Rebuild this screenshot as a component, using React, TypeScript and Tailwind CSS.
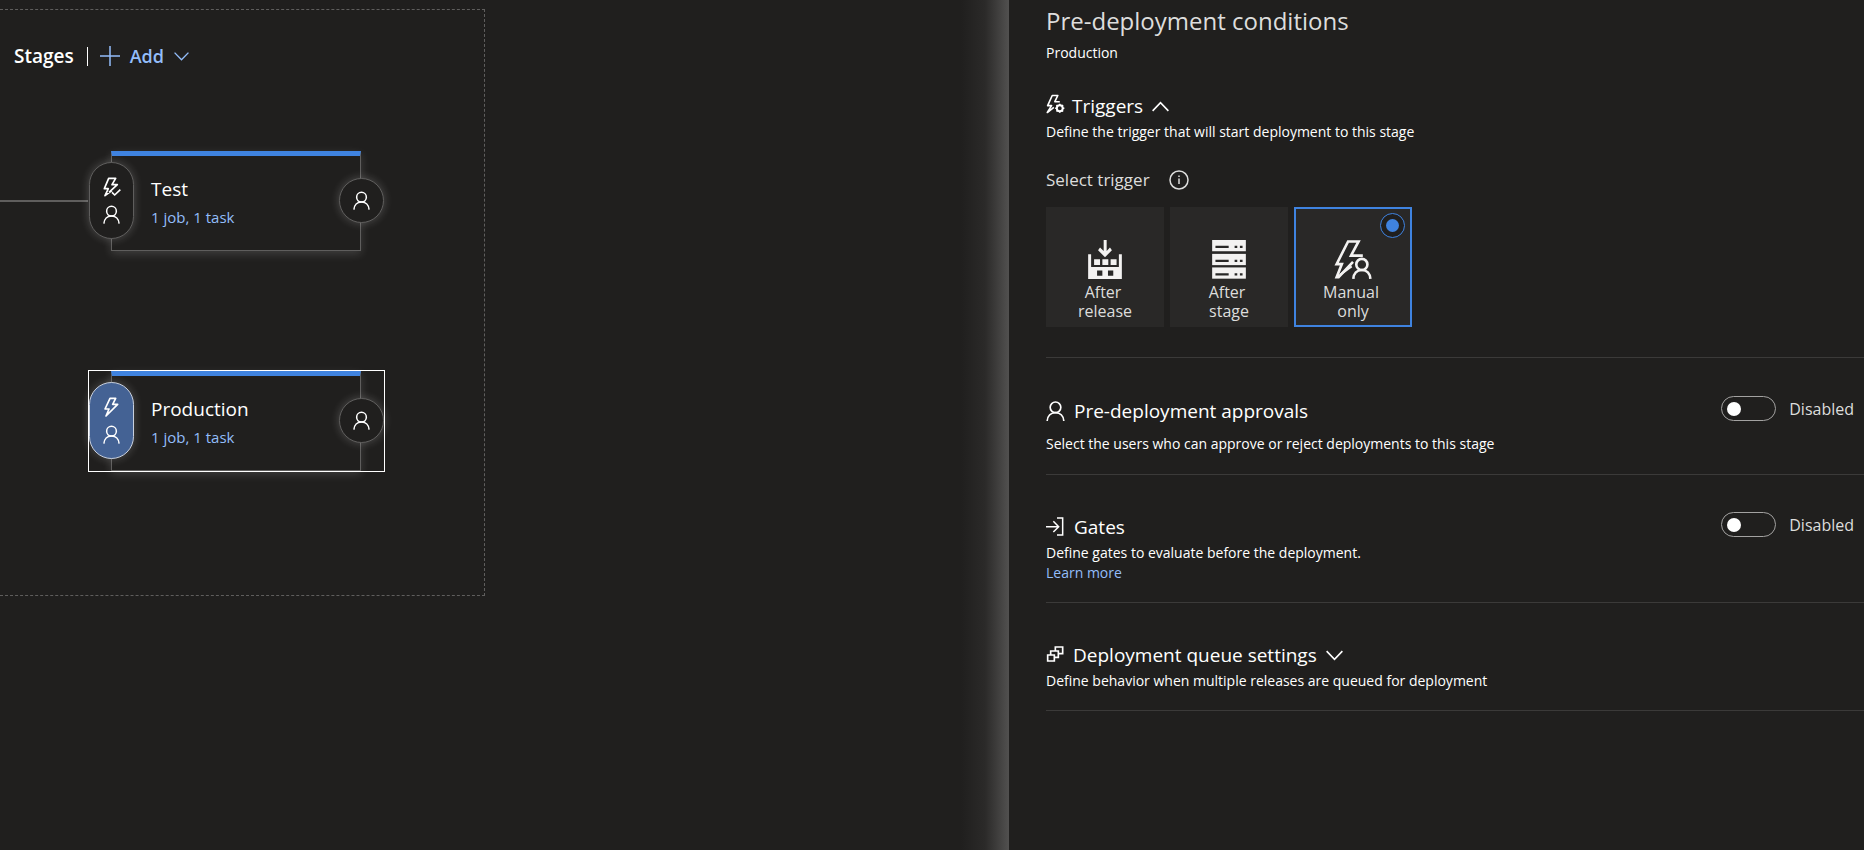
import React from "react";

type IconProps = { className?: string };

function PersonIcon({ className }: IconProps) {
  return (
    <svg viewBox="0 0 56 60" fill="none" stroke="currentColor" strokeWidth="5" className={className} aria-hidden="true">
      <circle cx="28" cy="19" r="16" />
      <path d="M3 60C4 45 14 35 28 35S52 45 53 60" />
    </svg>
  );
}

function BoltIcon({ className }: IconProps) {
  return (
    <svg viewBox="0 0 54 60" fill="none" stroke="currentColor" strokeWidth="5" strokeLinejoin="round" className={className} aria-hidden="true">
      <path d="M21 4H38L29 22H44L9 57L18 36H6Z" />
    </svg>
  );
}

function BoltCheckIcon({ className }: IconProps) {
  return (
    <svg viewBox="0 0 54 60" fill="none" stroke="currentColor" strokeWidth="5" strokeLinejoin="round" className={className} aria-hidden="true">
      <path d="M27 41L6 56L16 35H4L17 4H38L27 23H43L18 46" />
      <path d="M27 46L35 54L52 38" />
    </svg>
  );
}

function BoltGearIcon({ className }: IconProps) {
  return (
    <svg viewBox="0 0 58 60" fill="none" stroke="currentColor" strokeWidth="5" strokeLinejoin="round" className={className} aria-hidden="true">
      <path d="M42 23H27L36 4H19L5 35H17L4 56L24 40" />
      <circle cx="42" cy="43" r="9" strokeWidth="6" />
      <path d="M42 29V34M42 52V57M28 43H33M51 43H56M32 33L36 37M48 49L52 53M52 33L48 37M36 49L32 53" strokeWidth="5" />
    </svg>
  );
}

function BoltPersonIcon({ className }: IconProps) {
  return (
    <svg viewBox="0 0 116 118" fill="none" stroke="currentColor" strokeWidth="8" className={className} aria-hidden="true">
      <path d="M88 47H52L75 4H43L8 73H24L8 113H14L58 66" />
      <path d="M18 106L54 80" strokeWidth="6" />
      <circle cx="85" cy="74" r="17" />
      <path d="M59 118C60 101 70 91 85 91S110 101 111 118" />
    </svg>
  );
}

function ReleaseIcon({ className }: IconProps) {
  return (
    <svg viewBox="0 0 102 118" fill="currentColor" className={className} aria-hidden="true">
      <path d="M47 0H56V33L66 23L72 31L51 52L30 31L36 23L47 33Z" />
      <path d="M0 43H9V82H93V43H102V118H0Z" />
      <path d="M18 58H36V76H18ZM43 58H61V76H43ZM68 58H86V76H68Z" />
      <path d="M27 92H43V108H27ZM60 92H76V108H60Z" className="fill-[#292827]" />
    </svg>
  );
}

function ServerIcon({ className }: IconProps) {
  const rows = [0, 42, 83];
  return (
    <svg viewBox="0 0 102 118" fill="currentColor" className={className} aria-hidden="true">
      {rows.map((y) => (
        <g key={y}>
          <rect x="0" y={y} width="102" height="34" />
          <path d={`M10 ${y + 21}H50M68 ${y + 21}H76M84 ${y + 21}H92`} strokeWidth="7" className="stroke-[#292827]" />
        </g>
      ))}
    </svg>
  );
}

function GateIcon({ className }: IconProps) {
  return (
    <svg viewBox="0 0 54 57" fill="none" stroke="currentColor" strokeWidth="4.5" className={className} aria-hidden="true">
      <path d="M0 29H38M22 13L38 29L22 45M33 3H50V54H33" />
    </svg>
  );
}

function QueueIcon({ className }: IconProps) {
  return (
    <svg viewBox="0 0 54 51" fill="none" stroke="currentColor" strokeWidth="5" className={className} aria-hidden="true">
      <path d="M5 27H25V45H5ZM14 27V15H37V34H25M28 15V3H50V23H37" />
    </svg>
  );
}

function Chevron({ up = false, className }: IconProps & { up?: boolean }) {
  return (
    <svg viewBox="0 0 54 32" fill="none" stroke="currentColor" strokeWidth="5" className={className} aria-hidden="true">
      <path d={up ? "M2 30L27 4L52 30" : "M2 2L27 28L52 2"} />
    </svg>
  );
}

type StageProps = { name: string; selected?: boolean; triggerIcon: React.ReactNode };

function StageNode({ name, selected = false, triggerIcon }: StageProps) {
  return (
    <div className={`relative h-[102px] w-[297px] border px-[22px] ${selected ? "border-white" : "border-transparent"}`}>
      <div className="h-[100px] w-[250px] border border-t-[5px] border-[#5f5e5d] border-t-[#3f83e0] bg-[#201f1e] pl-[39px] pt-[17px] shadow-[0_3px_9px_rgba(255,255,255,0.15)]">
        <h3 className="text-[19px] leading-8 text-white">{name}</h3>
        <a href="#tasks" className="block text-[15px] leading-6 text-[#93bdfa]">1 job, 1 task</a>
      </div>
      <button
        type="button"
        aria-label={`${name} pre-deployment conditions`}
        className={`absolute left-0 top-[11px] flex h-[77px] w-[45px] flex-col items-center gap-2 rounded-full border pt-[14px] text-white shadow-[0_0_10px_rgba(255,255,255,0.22)] ${selected ? "border-[#c8d0de] bg-[#446294]" : "border-[#5f5e5d] bg-[#201f1e]"}`}
      >
        {triggerIcon}
        <PersonIcon className="h-[19px] w-[17px]" />
      </button>
      <button
        type="button"
        aria-label={`${name} post-deployment conditions`}
        className="absolute right-0 top-[27px] flex size-[45px] items-center justify-center rounded-full border border-[#5f5e5d] bg-[#201f1e] text-white shadow-[0_0_10px_rgba(255,255,255,0.22)]"
      >
        <PersonIcon className="h-[19px] w-[17px]" />
      </button>
    </div>
  );
}

type TriggerProps = { first: string; second: string; icon: React.ReactNode; checked?: boolean };

function TriggerOption({ first, second, icon, checked = false }: TriggerProps) {
  return (
    <label className="relative flex h-[120px] w-[118px] cursor-pointer flex-col items-center border-2 border-[#292827] bg-[#292827] pt-[31px] text-center text-[16px] leading-[19px] text-[#dddddc] has-checked:border-[#3f83e0]">
      <input type="radio" name="trigger" defaultChecked={checked} className="peer sr-only" />
      <span className="absolute right-[5px] top-1 hidden size-[25px] items-center justify-center rounded-full border border-[#3f83e0] bg-[#201f1e] peer-checked:flex">
        <span className="size-[13px] rounded-full bg-[#3f83e0]" />
      </span>
      {icon}
      <span className="mt-1 pr-1">{first}</span>
      <span>{second}</span>
    </label>
  );
}

function Toggle({ label }: { label: string }) {
  return (
    <label className="flex h-[25px] shrink-0 items-center gap-[13px] pr-2.5 text-[16px] text-[#dddddc]">
      <input
        type="checkbox"
        role="switch"
        aria-label={label}
        className="flex h-[25px] w-[55px] appearance-none items-center rounded-full border border-[#a3a2a1] px-[5px] before:size-[14px] before:rounded-full before:bg-white checked:justify-end"
      />
      Disabled
    </label>
  );
}

const heading = "flex items-center text-[19px] leading-6 text-white";
const note = "text-[14px] leading-5 text-white";

export default function App() {
  return (
    <div className="flex min-h-screen overflow-hidden bg-[#201f1e] font-['Open_Sans','Noto_Sans',sans-serif]">
      <main className="min-w-0 flex-1 pt-[9px]">
        <section className="flex h-[587px] w-[485px] flex-col border border-l-0 border-dashed border-[#5f5e5d] pt-[34px]">
          <header className="flex h-6 items-center pl-[14px]">
            <h2 className="text-[19px] font-semibold leading-6 text-white">Stages</h2>
            <span className="ml-[13px] h-[19px] w-px bg-white" />
            <button type="button" className="ml-3 flex items-center text-[18px] font-semibold leading-6 text-[#93bdfa]">
              <svg viewBox="0 0 20 20" className="mr-[10px] size-5" stroke="currentColor" strokeWidth="1.5" aria-hidden="true">
                <path d="M10 0V20M0 10H20" />
              </svg>
              Add
              <Chevron className="ml-[10px] h-[9px] w-[15px]" />
            </button>
          </header>
          <div className="mt-[82px] flex items-center">
            <span className="h-0.5 w-[88px] bg-[#5f5e5d]" />
            <StageNode name="Test" triggerIcon={<BoltCheckIcon className="h-5 w-[18px]" />} />
          </div>
          <div className="mt-[118px] pl-[88px]">
            <StageNode name="Production" selected triggerIcon={<BoltIcon className="h-5 w-[18px]" />} />
          </div>
        </section>
      </main>

      <div className="w-12 bg-linear-to-r from-[#201f1e] via-[#2b2a29] to-[#525150]" />

      <aside className="w-[855px] shrink-0 pl-[37px] pt-[5px]">
        <h1 className="text-[24px] leading-8 text-[#dddddc]">Pre-deployment conditions</h1>
        <p className={`mt-1.5 ${note}`}>Production</p>

        <section className="mt-[31px] border-b border-[#3b3a39] pb-[30px]">
          <h2>
            <button type="button" aria-expanded="true" className={heading}>
              <BoltGearIcon className="mb-1 mr-[7px] h-5 w-[19px]" />
              Triggers
              <Chevron up className="ml-[9px] h-[11px] w-[17px]" />
            </button>
          </h2>
          <p className={`mt-1 ${note}`}>Define the trigger that will start deployment to this stage</p>
          <div className="mt-[26px] flex items-center text-[17px] leading-6 text-[#dddddc]">
            Select trigger
            <button type="button" aria-label="About triggers" className="ml-[19px]">
              <svg viewBox="0 0 20 20" className="size-5" fill="none" stroke="currentColor" strokeWidth="1.5" aria-hidden="true">
                <circle cx="10" cy="10" r="9" />
                <path d="M10 8.5V14M10 5.5V7" />
              </svg>
            </button>
          </div>
          <div className="mt-[15px] flex gap-1.5">
            <TriggerOption first="After" second="release" icon={<ReleaseIcon className="h-[39px] w-[34px] text-[#f3f2f1]" />} />
            <TriggerOption first="After" second="stage" icon={<ServerIcon className="h-[39px] w-[34px] text-[#f3f2f1]" />} />
            <TriggerOption first="Manual" second="only" checked icon={<BoltPersonIcon className="h-[39px] w-[38px] text-[#f3f2f1]" />} />
          </div>
        </section>

        <section className="flex justify-between border-b border-[#3b3a39] pb-5 pt-[38px]">
          <div className="pt-[3px]">
            <h2 className={heading}>
              <PersonIcon className="mr-[9px] h-5 w-[19px]" />
              Pre-deployment approvals
            </h2>
            <p className={`mt-[11px] ${note}`}>Select the users who can approve or reject deployments to this stage</p>
          </div>
          <Toggle label="Pre-deployment approvals" />
        </section>

        <section className="flex justify-between border-b border-[#3b3a39] pb-[19px] pt-[37px]">
          <div className="pt-[3px]">
            <h2 className={heading}>
              <GateIcon className="mb-0.5 mr-[10px] h-[19px] w-[18px]" />
              Gates
            </h2>
            <p className={`mt-1 ${note}`}>Define gates to evaluate before the deployment.</p>
            <a href="#gates" className="block text-[14px] leading-5 text-[#93bdfa]">Learn more</a>
          </div>
          <Toggle label="Gates" />
        </section>

        <section className="border-b border-[#3b3a39] pb-[19px] pt-10">
          <h2>
            <button type="button" aria-expanded="false" className={heading}>
              <QueueIcon className="mb-0.5 mr-[9px] h-[17px] w-[18px]" />
              Deployment queue settings
              <Chevron className="ml-[9px] h-[11px] w-[17px]" />
            </button>
          </h2>
          <p className={`mt-1 ${note}`}>Define behavior when multiple releases are queued for deployment</p>
        </section>
      </aside>
    </div>
  );
}
